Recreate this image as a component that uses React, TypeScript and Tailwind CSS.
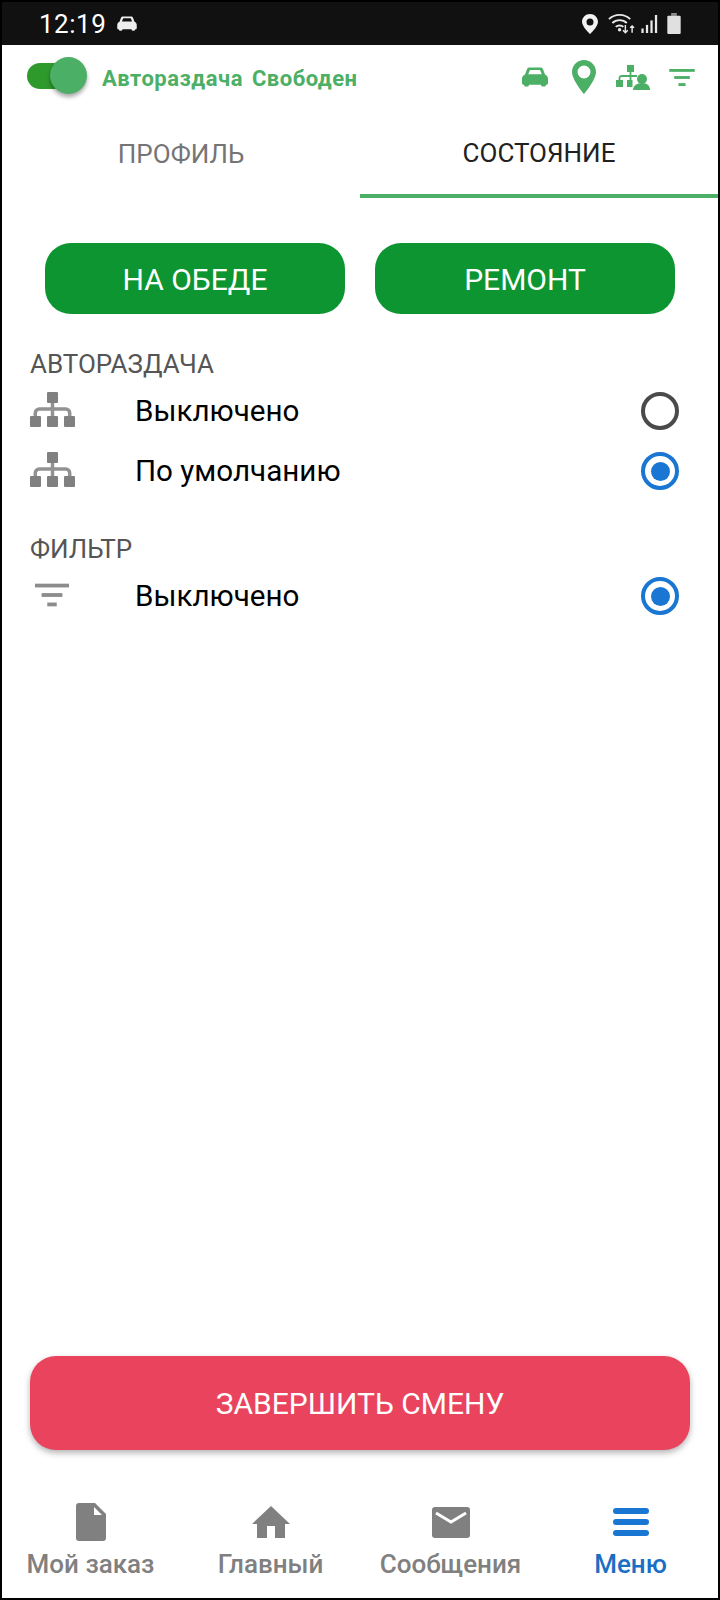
import React from 'react';

const HierarchyIcon = ({ className }: { className?: string }) => (
  <svg viewBox="0 0 45 35" className={className} fill="currentColor">
    <path d="M22.500 10v15M5.300 25v-4a4 4 0 0 1 4-4h26.400a4 4 0 0 1 4 4v4" fill="none" stroke="#929292" strokeWidth="3.500" />
    <rect x="17" y="0" width="11" height="11" rx="1" />
    <rect x="0" y="24" width="11" height="11" rx="1" />
    <rect x="17" y="24" width="11" height="11" rx="1" />
    <rect x="34" y="24" width="11" height="11" rx="1" />
  </svg>
);

const FilterIcon = ({ className }: { className?: string }) => (
  <svg viewBox="0 0 36 24" className={className} fill="currentColor">
    <rect x="0" y="0" width="36" height="4" />
    <rect x="7" y="10" width="22" height="4" />
    <rect x="13" y="20" width="10" height="4" />
  </svg>
);

const CarIcon = ({ className }: { className?: string }) => (
  <svg viewBox="0 0 26 20" className={className} fill="currentColor">
    <path
      fillRule="evenodd"
      d="M7.500 .5h11c1.200 0 2 .6 2.500 1.700L23 7.500c1.800.7 3 2.300 3 4.300V16c0 1-.6 1.700-1.500 1.700H24c0 1-.7 1.800-1.700 1.800h-1.600c-1 0-1.700-.8-1.700-1.800H7c0 1-.7 1.800-1.700 1.800H3.700c-1 0-1.700-.8-1.700-1.800h-.5C.6 17.700 0 17 0 16v-4.200c0-2 1.200-3.600 3-4.300l2-5.300C5.500 1.100 6.300 .5 7.500 .5zM8 3 6.200 7.300h13.600L18 3z"
    />
  </svg>
);

const PinIcon = ({ className }: { className?: string }) => (
  <svg viewBox="0 0 24 34" className={className} fill="currentColor">
    <path
      fillRule="evenodd"
      d="M12 0C5.400 0 0 5.300 0 11.900 0 20 12 34 12 34s12-14 12-22.100C24 5.300 18.600 0 12 0zm0 5.500a6.500 6.500 0 1 1 0 13 6.500 6.500 0 0 1 0-13z"
    />
  </svg>
);

const TeamIcon = ({ className }: { className?: string }) => (
  <svg viewBox="0 0 34 25" className={className} fill="currentColor">
    <rect x="11" y="0" width="7" height="7" />
    <rect x="0" y="15" width="7" height="7" />
    <rect x="11" y="15" width="5.500" height="7" />
    <path d="M14.500 7v8M3.500 15v-2a2 2 0 0 1 2-2H21" fill="none" stroke="currentColor" strokeWidth="1.800" />
    <circle cx="26" cy="14" r="5" />
    <path d="M17 25c0-4 3.500-7 9-7s8 3 8 7z" />
  </svg>
);

const Radio = ({ checked }: { checked?: boolean }) => (
  <div
    className={`flex h-[38px] w-[38px] items-center justify-center rounded-full border-[4px] ${
      checked ? 'border-[#1976d2]' : 'border-[#4a4a4a]'
    }`}
  >
    {checked && <div className="h-[19px] w-[19px] rounded-full bg-[#1976d2]" />}
  </div>
);

const OptionRow = ({ icon, label, checked, height }: { icon: React.ReactNode; label: string; checked?: boolean; height: string }) => (
  <div className={`flex items-center pl-[28px] pr-[39px] ${height}`}>
    <div className="mb-[3px] w-[105px] shrink-0">{icon}</div>
    <span className="flex-1 text-[29.6px] text-black">{label}</span>
    <Radio checked={checked} />
  </div>
);

const NavItem = ({ icon, label, active }: { icon: React.ReactNode; label: string; active?: boolean }) => (
  <div className="flex w-[175px] flex-col items-center">
    <div className="flex h-[40px] items-center justify-center">{icon}</div>
    <span className={`mt-[7px] text-[26px] leading-[30px] font-medium ${active ? 'text-[#1a6fc4]' : 'text-[#808080]'}`}>
      {label}
    </span>
  </div>
);

export default function App() {
  return (
    <div
      className="flex h-[1600px] w-[720px] flex-col border-2 border-black bg-white"
      style={{ fontFamily: 'Roboto, sans-serif' }}
    >
      {/* status bar */}
      <div className="flex h-[43px] shrink-0 items-center bg-[#111111] pl-[37px] pr-[37px] text-white">
        <span className="text-[26px] leading-none tracking-[0.5px]">12:19</span>
        <CarIcon className="ml-[11px] h-[15px] w-[20px] text-[#eeeeee]" />
        <div className="ml-auto flex items-center">
          <svg viewBox="0 0 16 20" className="h-[20px] w-[16px]" fill="#f2f2f2">
            <path
              fillRule="evenodd"
              d="M8 0C3.600 0 0 3.500 0 7.800 0 13 8 20 8 20s8-7 8-12.200C16 3.500 12.400 0 8 0zm0 4.500a3.500 3.500 0 1 1 0 7 3.500 3.500 0 0 1 0-7z"
            />
          </svg>
          <svg viewBox="0 0 28 22" className="ml-[10px] h-[22px] w-[27px]" fill="none" stroke="#e8e8e8">
            <path strokeWidth="2" d="M1 6c6-6 16-6 22 0M4.500 10c4-4 11-4 15 0M8 14c2.200-2 5.800-2 8 0" />
            <circle cx="12" cy="17" r="1.800" fill="#e8e8e8" stroke="none" />
            <path strokeWidth="1.500" d="M18 12v8m-2.500-2.500 2.500 2.500 2.500-2.500M25 20v-7m-2 2 2-2 2 2" />
          </svg>
          <svg viewBox="0 0 18 20" className="ml-[6px] h-[18px] w-[17px]" fill="#e8e8e8">
            <rect x="0" y="15" width="2.500" height="5" />
            <rect x="5" y="11" width="2.500" height="9" />
            <rect x="10" y="6" width="2.500" height="14" />
            <rect x="15" y="0" width="2.500" height="20" />
          </svg>
          <svg viewBox="0 0 14 22" className="ml-[9px] h-[21px] w-[14px]" fill="#e0e0e0">
            <rect x="4" y="0" width="6" height="3" fill="#8a8a8a" />
            <rect x="0" y="3" width="14" height="19" rx="1" />
          </svg>
        </div>
      </div>

      {/* header */}
      <div className="flex h-[64px] shrink-0 items-center pl-[25px] pr-[23px]">
        <div className="relative mb-[2px] h-[26px] w-[60px]">
          <div className="h-[26px] w-[40px] rounded-full bg-[#2f9a2c]" />
          <div className="absolute top-[-6px] left-[23px] h-[37px] w-[37px] rounded-full bg-[#4caf66] shadow-[0_3px_4px_rgba(0,0,0,0.35)]" />
        </div>
        <span className="mt-[2px] ml-[15px] text-[22px] font-bold tracking-[0.5px] text-[#4caf66] [word-spacing:3px]">Автораздача Свободен</span>
        <div className="ml-auto flex items-center text-[#4caf66]">
          <CarIcon className="h-[20px] w-[26px]" />
          <PinIcon className="ml-[24px] h-[34px] w-[24px]" />
          <TeamIcon className="ml-[20px] h-[25px] w-[34px]" />
          <FilterIcon className="ml-[19px] h-[17px] w-[26px]" />
        </div>
      </div>

      {/* tabs */}
      <div className="flex h-[89px] shrink-0">
        <div className="flex w-[358px] items-center justify-center pt-[2px] text-[26px] text-[#757575]">ПРОФИЛЬ</div>
        <div className="flex flex-1 items-center justify-center border-b-4 border-[#4caf66] pt-[3px] text-[26px] text-[#212121]">
          СОСТОЯНИЕ
        </div>
      </div>

      {/* state buttons */}
      <div className="mt-[45px] flex shrink-0 gap-[30px] pl-[43px]">
        <div className="flex h-[71px] w-[300px] items-center justify-center rounded-[26px] bg-[#0c9530] pt-[1px] text-[30px] text-white">
          НА ОБЕДЕ
        </div>
        <div className="flex h-[71px] w-[300px] items-center justify-center rounded-[26px] bg-[#0c9530] pt-[1px] text-[30px] text-white">
          РЕМОНТ
        </div>
      </div>

      {/* options */}
      <div className="mt-[35px] pl-[28px] text-[26px] leading-[30px] text-[#555555]">АВТОРАЗДАЧА</div>
      <OptionRow
        height="h-[60px] mt-[2px]"
        label="Выключено"
        icon={<HierarchyIcon className="h-[35px] w-[45px] text-[#808080]" />}
      />
      <OptionRow
        height="h-[60px]"
        label="По умолчанию"
        checked
        icon={<HierarchyIcon className="h-[35px] w-[45px] text-[#808080]" />}
      />
      <div className="mt-[33px] pl-[28px] text-[26px] leading-[30px] text-[#555555]">ФИЛЬТР</div>
      <OptionRow
        height="h-[60px] mt-[2px]"
        label="Выключено"
        checked
        icon={<FilterIcon className="ml-[5px] h-[24px] w-[34px] text-[#8c8c8c]" />}
      />

      <div className="flex-1" />

      {/* end shift */}
      <div className="mx-[28px] flex h-[94px] shrink-0 items-center justify-center rounded-[26px] bg-[#e9435e] text-[30px] text-white shadow-[0_3px_6px_rgba(0,0,0,0.3)]">
        ЗАВЕРШИТЬ СМЕНУ
      </div>

      {/* bottom nav */}
      <div className="mt-[52px] mb-[19px] flex shrink-0 gap-[5px] pl-[1px]">
        <NavItem
          label="Мой заказ"
          icon={
            <svg viewBox="0 0 30 38" className="h-[38px] w-[30px]" fill="#808080">
              <path d="M3 0h16l11 11v24a3 3 0 0 1-3 3H3a3 3 0 0 1-3-3V3a3 3 0 0 1 3-3z" />
              <path d="M18 4v8h8z" fill="#ffffff" />
            </svg>
          }
        />
        <NavItem
          label="Главный"
          icon={
            <svg viewBox="0 0 38 32" className="h-[32px] w-[38px]" fill="#808080">
              <path d="M19 0 38 18h-5v14H23V20h-8v12H5V18H0z" />
            </svg>
          }
        />
        <NavItem
          label="Сообщения"
          icon={
            <svg viewBox="0 0 38 31" className="h-[31px] w-[38px]">
              <rect width="38" height="31" rx="3" fill="#808080" />
              <path d="M4 6l15 9 15-9" fill="none" stroke="#ffffff" strokeWidth="3" />
            </svg>
          }
        />
        <NavItem
          active
          label="Меню"
          icon={
            <svg viewBox="0 0 36 28" className="h-[28px] w-[36px]" fill="#1976d2">
              <rect y="0" width="36" height="6" rx="3" />
              <rect y="11" width="36" height="6" rx="3" />
              <rect y="22" width="36" height="6" rx="3" />
            </svg>
          }
        />
      </div>
    </div>
  );
}
